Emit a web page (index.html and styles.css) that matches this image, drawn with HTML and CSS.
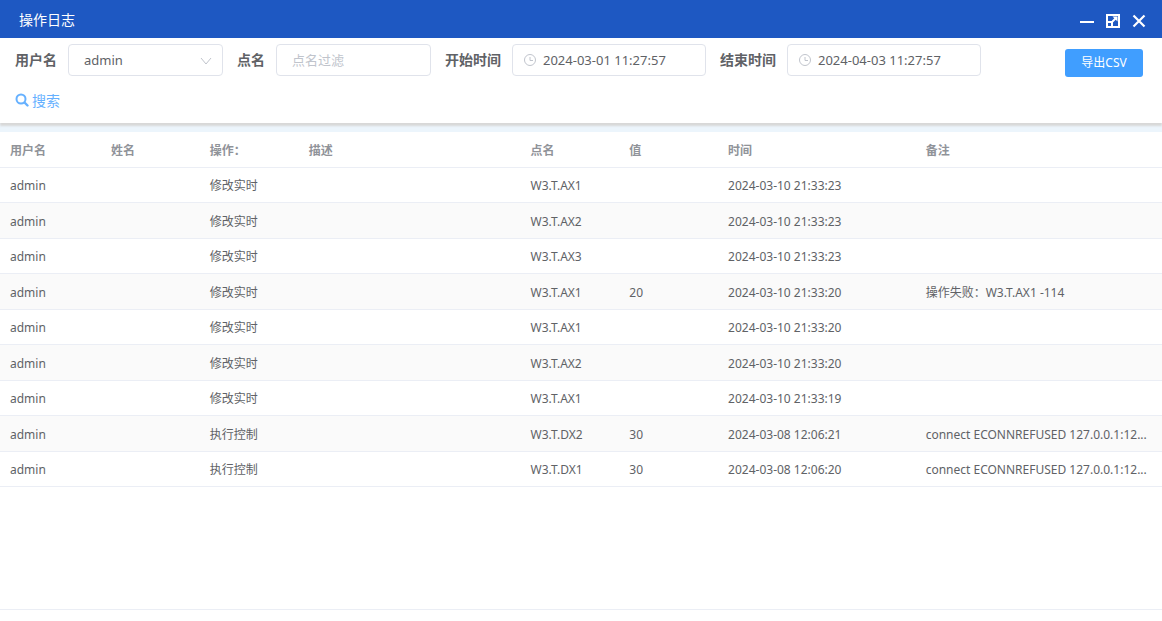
FILE: index.html
```html
<!DOCTYPE html>
<html lang="zh-CN">
<head>
<meta charset="utf-8">
<title>操作日志</title>
<link rel="stylesheet" href="styles.css">
</head>
<body>
<main class="window">
  <header class="titlebar">
    <h1 class="title">操作日志</h1>
    <div class="window-actions">
      <button type="button" class="icon-button" aria-label="最小化"><svg viewBox="0 0 16 16"><path d="M1 9h14" stroke="currentColor" stroke-width="2"/></svg></button>
      <button type="button" class="icon-button" aria-label="最大化"><svg viewBox="0 0 16 16"><path d="M2 8V2h12v12H8" fill="none" stroke="currentColor" stroke-width="2"/><path d="M2 9h5v5H2z" fill="none" stroke="currentColor" stroke-width="2"/><path d="M7.500 8.500l4-4" fill="none" stroke="currentColor" stroke-width="2"/><path d="M7.500 3.500h5v5z" fill="currentColor"/></svg></button>
      <button type="button" class="icon-button" aria-label="关闭"><svg viewBox="0 0 16 16"><path d="M2.500 2.500l11 11m0-11l-11 11" stroke="currentColor" stroke-width="2.200"/></svg></button>
    </div>
  </header>
  <section class="toolbar">
    <form class="filters">
      <div class="field">
        <label for="user">用户名</label>
        <div class="control">
          <select id="user" class="input"><option>admin</option></select>
          <svg class="chevron" viewBox="0 0 12 12"><path d="M1 3l5 6 5-6" fill="none" stroke="currentColor"/></svg>
        </div>
      </div>
      <div class="field">
        <label for="point">点名</label>
        <div class="control"><input id="point" class="input" type="text" placeholder="点名过滤"></div>
      </div>
      <div class="field">
        <label for="start">开始时间</label>
        <div class="control control-date">
          <svg class="clock" viewBox="0 0 12 12"><circle cx="6" cy="6" r="5.500" fill="none" stroke="currentColor"/><path d="M6 3v3.500h3" fill="none" stroke="currentColor"/></svg>
          <input id="start" class="input" type="text" value="2024-03-01 11:27:57">
        </div>
      </div>
      <div class="field">
        <label for="end">结束时间</label>
        <div class="control control-date">
          <svg class="clock" viewBox="0 0 12 12"><circle cx="6" cy="6" r="5.500" fill="none" stroke="currentColor"/><path d="M6 3v3.500h3" fill="none" stroke="currentColor"/></svg>
          <input id="end" class="input" type="text" value="2024-04-03 11:27:57">
        </div>
      </div>
      <button type="button" class="search"><svg viewBox="0 0 14 14"><circle cx="6" cy="6" r="4.500" fill="none" stroke="currentColor" stroke-width="2"/><path d="M9.500 9.500l3 3" stroke="currentColor" stroke-width="2.400" stroke-linecap="round"/></svg>搜索</button>
    </form>
    <div class="actions"><button type="button" class="export">导出CSV</button></div>
  </section>
  <section class="table-area">
    <table class="log">
      <colgroup><col class="c-user"><col class="c-name"><col class="c-op"><col class="c-desc"><col class="c-point"><col class="c-value"><col class="c-time"><col></colgroup>
      <thead><tr><th>用户名</th><th>姓名</th><th>操作：</th><th>描述</th><th>点名</th><th>值</th><th>时间</th><th>备注</th></tr></thead>
      <tbody>
        <tr><td>admin</td><td></td><td>修改实时</td><td></td><td>W3.T.AX1</td><td></td><td>2024-03-10 21:33:23</td><td></td></tr>
        <tr><td>admin</td><td></td><td>修改实时</td><td></td><td>W3.T.AX2</td><td></td><td>2024-03-10 21:33:23</td><td></td></tr>
        <tr><td>admin</td><td></td><td>修改实时</td><td></td><td>W3.T.AX3</td><td></td><td>2024-03-10 21:33:23</td><td></td></tr>
        <tr><td>admin</td><td></td><td>修改实时</td><td></td><td>W3.T.AX1</td><td>20</td><td>2024-03-10 21:33:20</td><td>操作失败：W3.T.AX1 -114</td></tr>
        <tr><td>admin</td><td></td><td>修改实时</td><td></td><td>W3.T.AX1</td><td></td><td>2024-03-10 21:33:20</td><td></td></tr>
        <tr><td>admin</td><td></td><td>修改实时</td><td></td><td>W3.T.AX2</td><td></td><td>2024-03-10 21:33:20</td><td></td></tr>
        <tr><td>admin</td><td></td><td>修改实时</td><td></td><td>W3.T.AX1</td><td></td><td>2024-03-10 21:33:19</td><td></td></tr>
        <tr><td>admin</td><td></td><td>执行控制</td><td></td><td>W3.T.DX2</td><td>30</td><td>2024-03-08 12:06:21</td><td>connect ECONNREFUSED 127.0.0.1:12...</td></tr>
        <tr><td>admin</td><td></td><td>执行控制</td><td></td><td>W3.T.DX1</td><td>30</td><td>2024-03-08 12:06:20</td><td>connect ECONNREFUSED 127.0.0.1:12...</td></tr>
      </tbody>
    </table>
  </section>
</main>
</body>
</html>
```
FILE: styles.css
```css
* { box-sizing: border-box; }
body {
  margin: 0;
  font-family: "Noto Sans", "Noto Sans CJK SC", sans-serif;
  font-size: 12px;
  color: #606266;
  background: #fff;
}
button, input, select { font: inherit; color: inherit; margin: 0; }
svg { display: block; }
.window { display: flex; flex-direction: column; min-height: 100vh; padding-bottom: 11px; }
.titlebar {
  display: flex;
  align-items: center;
  justify-content: space-between;
  height: 38px;
  padding: 2px 15px 0 19px;
  background: #1e58c2;
  color: #fff;
}
.title { margin: 0; font-size: 14px; font-weight: 400; line-height: 20px; }
.window-actions { display: flex; gap: 10px; padding-top: 2px; }
.icon-button { width: 16px; height: 16px; padding: 0; border: 0; background: none; color: #fff; }
.toolbar {
  display: flex;
  padding: 6px 19px 7px 15px;
  background: #fff;
  box-shadow: 0 3px 2px #d8d8d8;
  z-index: 1;
}
.filters { flex: 1; display: flex; flex-wrap: wrap; gap: 8px 14px; }
.field { display: flex; align-items: center; gap: 11px; }
.field label { font-size: 14px; font-weight: 700; line-height: 20px; padding-bottom: 1px; }
.control { position: relative; width: 155px; }
.control-date { width: 194px; }
.input {
  display: block;
  width: 100%;
  height: 32px;
  padding: 0 15px;
  border: 1px solid #e0e3eb;
  border-radius: 4px;
  background: #fff;
  font-size: 13px;
  appearance: none;
}
.input::placeholder { color: #c0c4cc; opacity: 1; }
.control-date .input { padding-left: 30px; }
.chevron { position: absolute; right: 11px; top: 11px; width: 12px; height: 12px; color: #c0c4cc; }
.clock { position: absolute; left: 12px; top: 10px; width: 12px; height: 12px; color: #c0c4cc; }
.search {
  display: flex;
  align-items: center;
  gap: 3px;
  height: 32px;
  padding: 0 0 1px;
  border: 0;
  background: none;
  color: #66b1ff;
  font-size: 14px;
}
.search svg { width: 14px; height: 14px; }
.actions { width: 12%; text-align: right; padding-top: 5px; }
.export {
  width: 78px;
  height: 28px;
  padding: 0;
  border: 0;
  border-radius: 3px;
  background: #409eff;
  color: #fff;
  font-size: 12px;
  line-height: 24px;
}
.table-area { flex: 1; border-top: 9px solid #ecf5fc; border-bottom: 1px solid #ebeef5; }
.log { width: 100%; table-layout: fixed; border-collapse: separate; border-spacing: 0; }
.log th, .log td {
  height: 35px;
  padding: 2px 10px 0;
  border-bottom: 1px solid #ebeef5;
  text-align: left;
  line-height: 20px;
  white-space: nowrap;
  overflow: hidden;
  text-overflow: ellipsis;
}
.log th { height: 36px; color: #909399; font-weight: 700; }
.log tbody tr:nth-child(even) td { height: 36px; background: #fafafa; }
.c-user { width: 8.7%; }
.c-name, .c-op, .c-point, .c-value { width: 8.5%; }
.c-desc { width: 19.1%; }
.c-time { width: 17%; }
```
